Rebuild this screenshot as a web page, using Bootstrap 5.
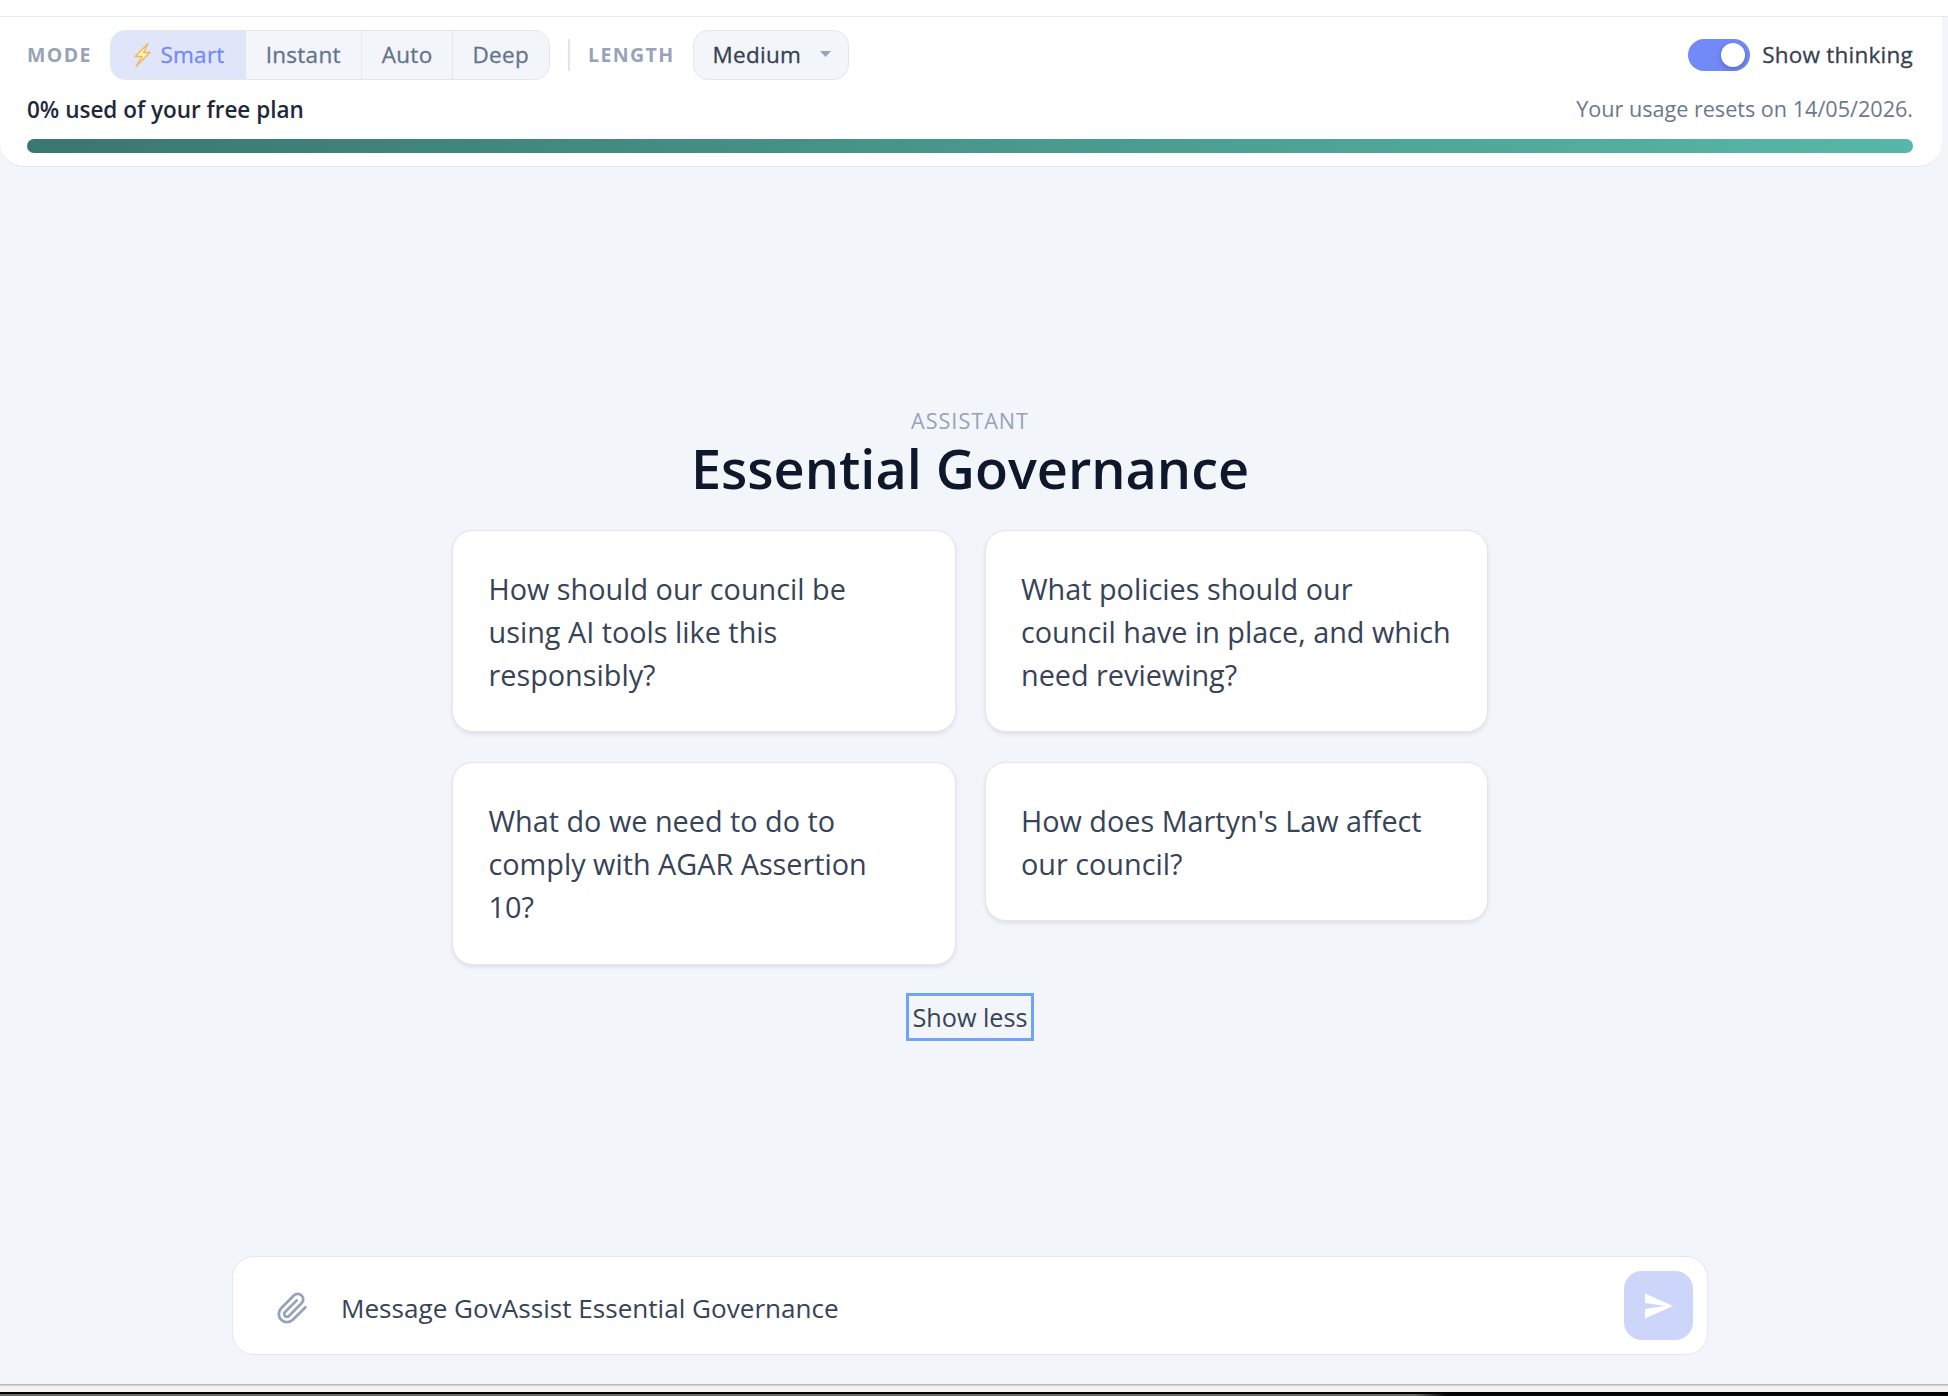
<!DOCTYPE html>
<html lang="en">
<head>
<meta charset="utf-8">
<title>Essential Governance</title>
<link href="https://cdn.jsdelivr.net/npm/bootstrap@5.3.0/dist/css/bootstrap.min.css" rel="stylesheet">
<style>
body{font-family:"Open Sans","Noto Sans",sans-serif;background:#f2f5fa;color:#374151;height:1396px;overflow:hidden;line-height:1.2}
.top-strip{height:17px;background:#fff;border-bottom:1px solid #e6ebf2;flex:none}
.settings{width:1942px;height:150px;background:#fff;border-bottom:1px solid #e2e7ee;border-radius:0 0 24px 24px;padding:13px 29px 0 27px;flex:none}
.tag-label{font-size:19.5px;font-weight:700;letter-spacing:1.4px;color:#97a3b8}
.medium-weight{font-size:22.5px;font-weight:400;letter-spacing:.28px;-webkit-text-stroke:.3px currentColor}
.modes{height:50px;border:1px solid #e2e7ee;border-radius:15px;overflow:hidden;background:#f2f5fa;margin-left:18px}
.modes .btn{border:0;border-left:1px solid #e2e7ee;border-radius:0;color:#66738a;line-height:1;padding:0 20px;height:48px}
.modes .btn:first-child{border-left:0;background:#e1e5f9;color:#7289f8}
.modes .btn:last-child{padding:0 20px 0 19px}
.bolt{margin-right:7.500px}
.rule{width:2px;height:32px;background:#e1e6ee;margin:0 18px 0 18px}
.length-box{width:156px;height:50px;border:1px solid #e2e7ee;border-radius:15px;background:#f2f5fa;padding:0 17px 2px 19px;margin-left:18px}
.toggle{width:62px;height:32px;border-radius:16px;background:#7289f8;padding:4px 5px}
.knob{width:24px;height:24px;border-radius:50%;background:#fff;box-shadow:0 2px 5px rgba(0,0,0,.25)}
.think{margin-left:12.500px;padding-bottom:2px;letter-spacing:.23px}
.usage{height:59px}
.used{font-size:22.5px;font-weight:600;color:#1e293b}
.resets{font-size:21.6px;color:#6b788e;padding-bottom:1px}
.progress.meter{height:14px;border-radius:7px}
.meter .progress-bar{background:linear-gradient(135deg,#39776f,#58b7a8)}
.main-col{width:1940px}
.kicker{font-size:21.6px;letter-spacing:1px;color:#97a3b8;line-height:30px;margin-top:239px}
.headline{font-size:54px;font-weight:600;color:#0f172a;line-height:64px;margin:0}
.prompts{width:1036px;gap:29.500px 29px;margin-top:29.500px}
.prompt{width:503.500px;border:1px solid #e2e7ec;border-radius:21px;box-shadow:0 2px 4px rgba(0,0,0,.09);padding:36px 35px 35px 35.500px;font-size:28.8px;line-height:43.3px;background:#fff;color:#374357}
.less{border:3px solid #6fa4f6;width:128px;height:48px;font-size:25.2px;color:#374357;margin-top:28.500px}
.composer{width:1476px;height:99px;border:1px solid #e2e7f0;border-radius:22px;background:#fff;padding:0 14px 0 43px;margin-top:auto;margin-bottom:29px}
.entry{padding-top:6px}
.message{font-size:26.1px;color:#374357;margin-left:32px}
.send{width:69px;height:69px;border-radius:18px;background:#ced5fb;border:0;padding:0}
.edge{height:12px;flex:none;background:linear-gradient(#bcbcbe 0 1px,#d0d0d2 1px 2px,#f2f2f3 2px 8px,#000 8px 10px,transparent 10px),linear-gradient(90deg,#6c6667 0 1415px,#0b0508 1446px)}
</style>
<script src="https://cdn.jsdelivr.net/npm/bootstrap@5.3.0/dist/js/bootstrap.bundle.min.js"></script>
</head>
<body class="d-flex flex-column">
<div class="top-strip"></div>
<header class="settings">
  <div class="d-flex align-items-center">
    <span class="tag-label">MODE</span>
    <div class="modes d-flex">
      <button class="btn medium-weight d-flex align-items-center"><svg class="bolt" width="22" height="28" viewBox="0 0 22 28"><path d="M17 2.500 4 15.500H11L5 25.500 19 11.500H12.500z" fill="#fff7a8" stroke="#f2b45c" stroke-width="1.300" stroke-linejoin="round"/></svg>Smart</button>
      <button class="btn medium-weight">Instant</button>
      <button class="btn medium-weight">Auto</button>
      <button class="btn medium-weight">Deep</button>
    </div>
    <span class="rule"></span>
    <span class="tag-label">LENGTH</span>
    <div class="length-box medium-weight d-flex align-items-center justify-content-between">Medium<svg width="11" height="6" viewBox="0 0 11 6"><path d="M0 0h11L5.500 6z" fill="#97a3b8"/></svg></div>
    <div class="toggle d-flex justify-content-end ms-auto"><span class="knob"></span></div>
    <span class="think medium-weight">Show thinking</span>
  </div>
  <div class="usage d-flex align-items-center justify-content-between"><span class="used">0% used of your free plan</span><span class="resets">Your usage resets on 14/05/2026.</span></div>
  <div class="progress meter"><div class="progress-bar w-100"></div></div>
</header>
<main class="main-col d-flex flex-column align-items-center flex-grow-1">
  <div class="kicker">ASSISTANT</div>
  <h1 class="headline">Essential Governance</h1>
  <div class="prompts d-flex flex-wrap align-items-start">
    <div class="prompt">How should our council be using AI tools like this responsibly?</div>
    <div class="prompt">What policies should our council have in place, and which need reviewing?</div>
    <div class="prompt">What do we need to do to comply with AGAR Assertion<br>10?</div>
    <div class="prompt">How does Martyn's Law affect our council?</div>
  </div>
  <div class="less d-flex align-items-center justify-content-center">Show less</div>
  <div class="composer d-flex align-items-center">
    <div class="entry d-flex align-items-center">
      <svg width="33" height="33" viewBox="0 0 24 24" fill="none" stroke="#97a3b8" stroke-width="2" stroke-linecap="round" stroke-linejoin="round"><path d="M21.440 11.050l-9.190 9.190a6 6 0 0 1-8.490-8.490l9.190-9.190a4 4 0 0 1 5.660 5.660l-9.200 9.190a2 2 0 0 1-2.830-2.830l8.490-8.480"/></svg>
      <span class="message">Message GovAssist Essential Governance</span>
    </div>
    <button class="send ms-auto d-flex align-items-center justify-content-center"><svg width="30" height="26" viewBox="0 0 30 26"><path d="M1 0.500 29 13 1 25.500V16L21 13 1 10z" fill="#fff"/></svg></button>
  </div>
</main>
<div class="edge"></div>
</body>
</html>
